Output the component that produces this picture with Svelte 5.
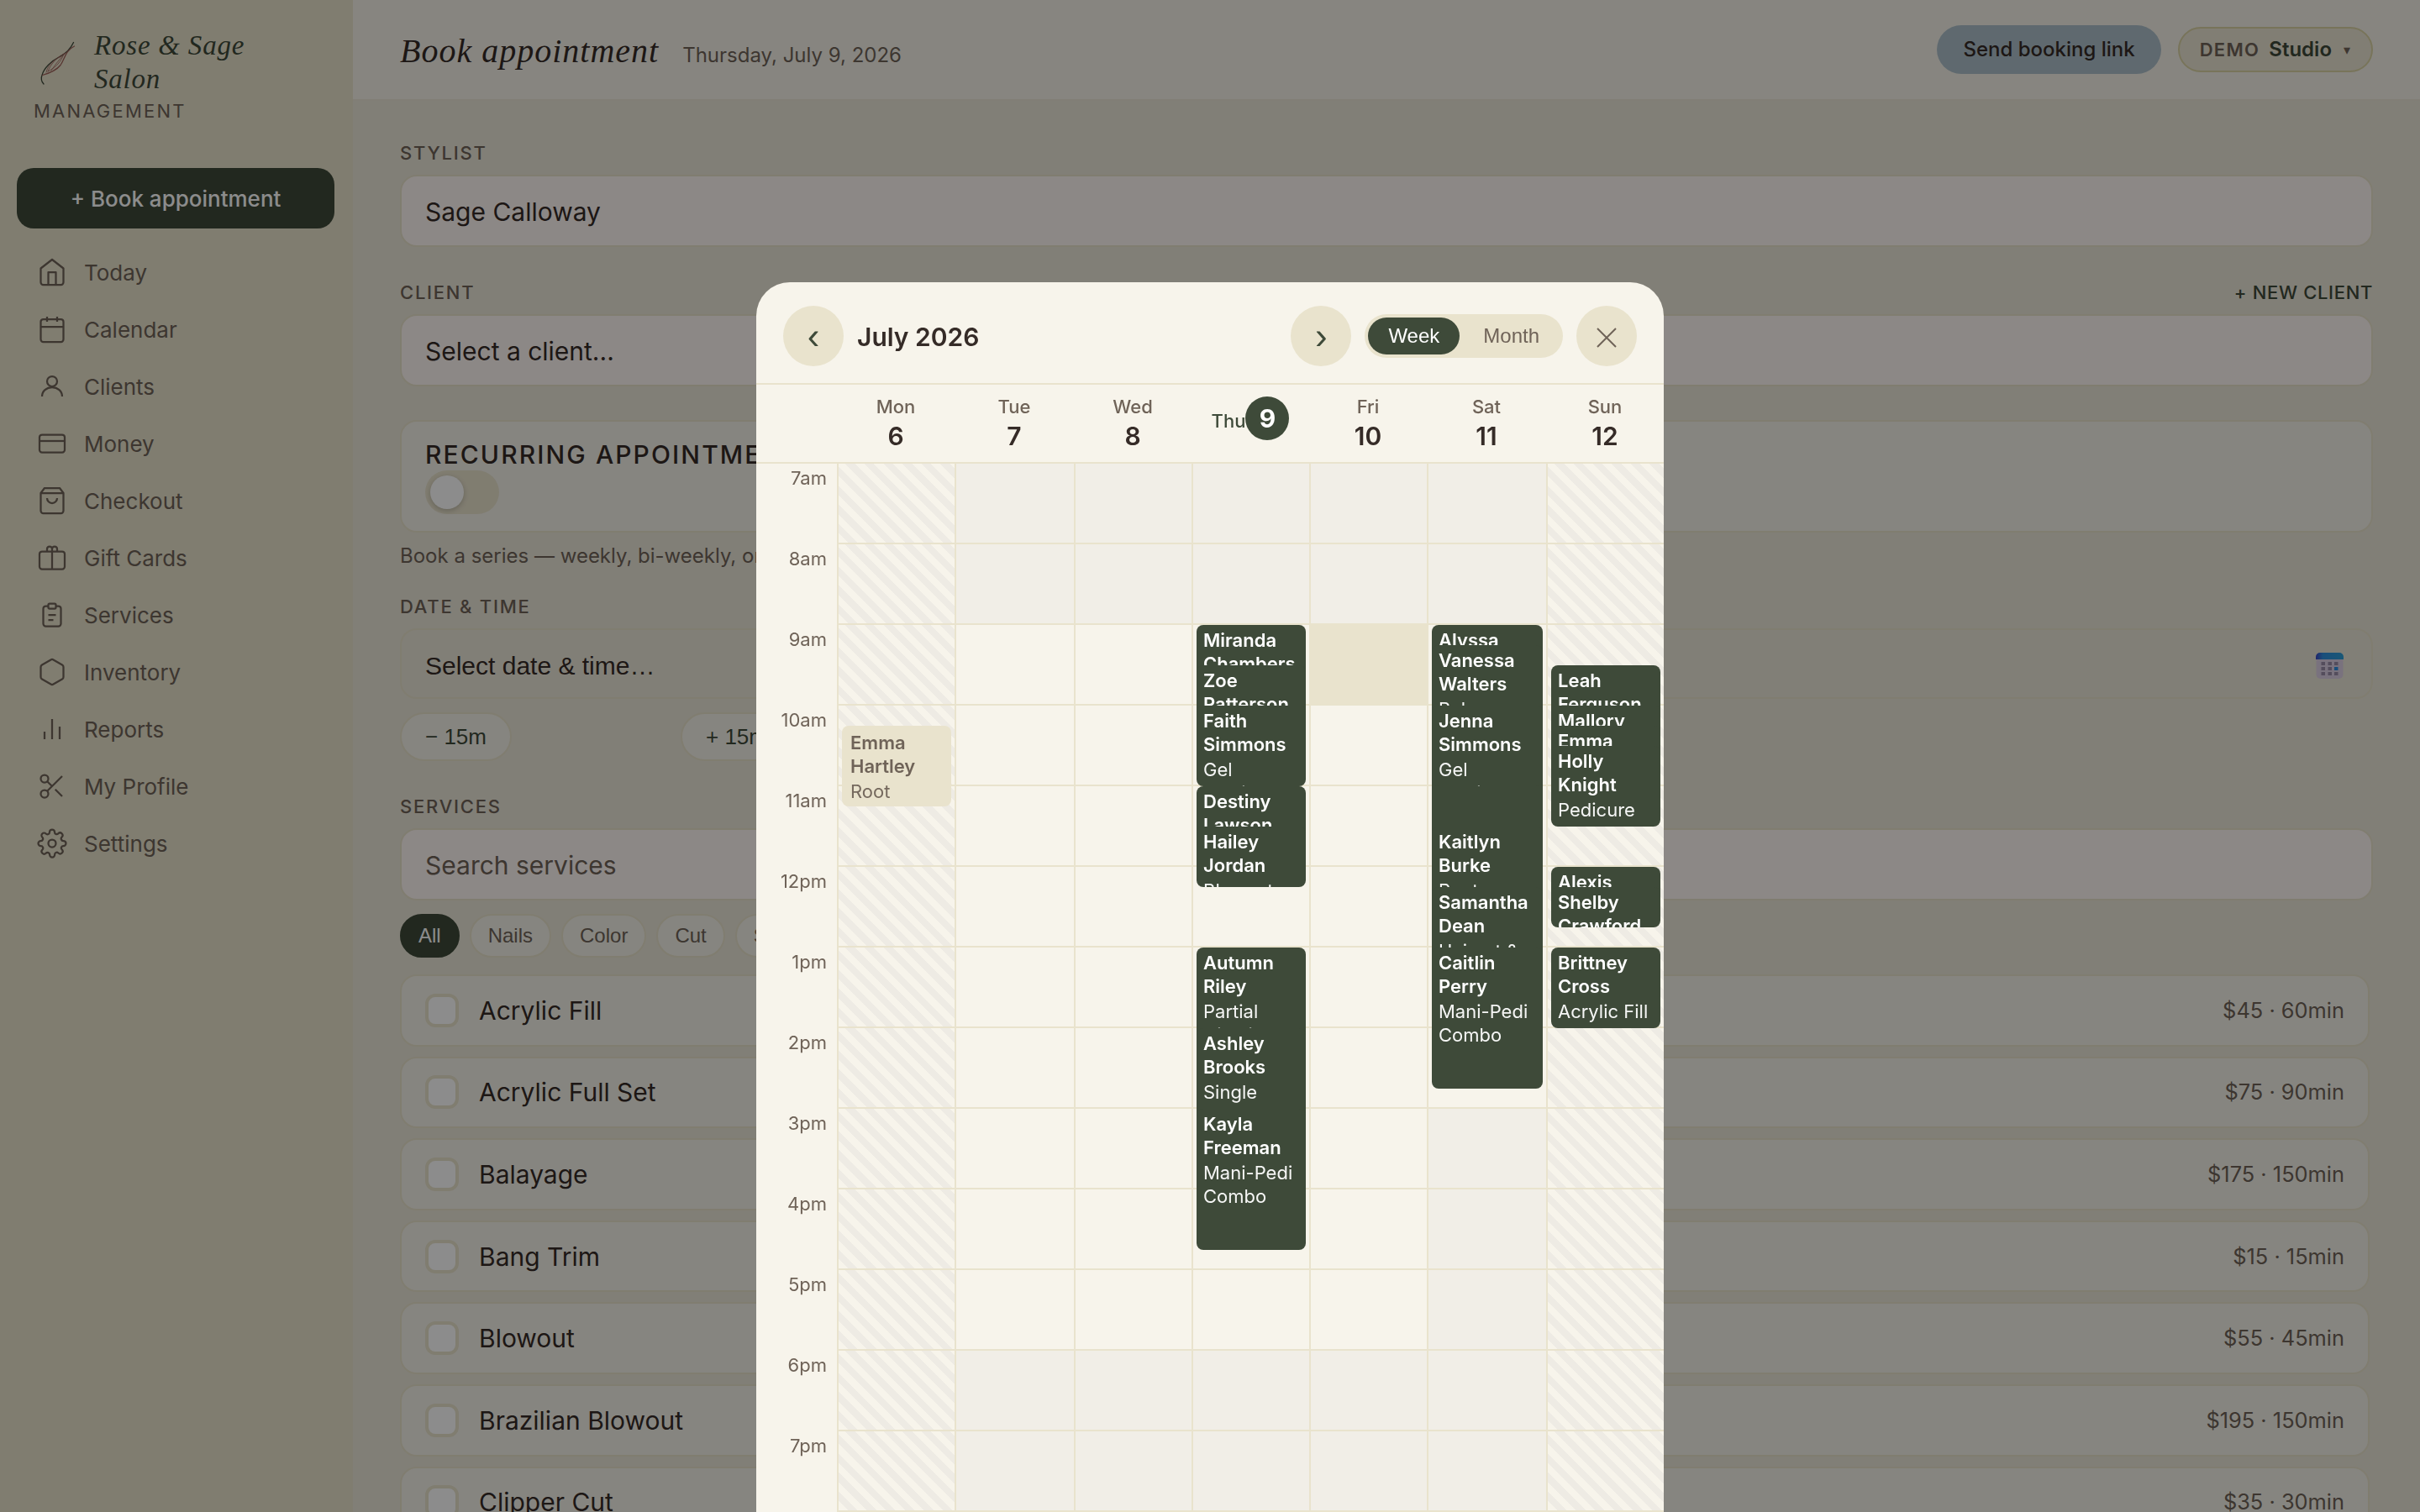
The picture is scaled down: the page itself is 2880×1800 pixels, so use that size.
<script>
  const HOUR = 96;
  const FIRST_HOUR = 7;

  const nav = [
    { label: "Today", icon: "home" },
    { label: "Calendar", icon: "calendar" },
    { label: "Clients", icon: "user" },
    { label: "Money", icon: "card" },
    { label: "Checkout", icon: "bag" },
    { label: "Gift Cards", icon: "gift" },
    { label: "Services", icon: "clipboard" },
    { label: "Inventory", icon: "box" },
    { label: "Reports", icon: "chart" },
    { label: "My Profile", icon: "scissors" },
    { label: "Settings", icon: "gear" },
  ];

  const categories = ["All", "Nails", "Color", "Cut", "Styling"];

  const services = [
    { name: "Acrylic Fill", price: 45, mins: 60 },
    { name: "Acrylic Full Set", price: 75, mins: 90 },
    { name: "Balayage", price: 175, mins: 150 },
    { name: "Bang Trim", price: 15, mins: 15 },
    { name: "Blowout", price: 55, mins: 45 },
    { name: "Brazilian Blowout", price: 195, mins: 150 },
    { name: "Clipper Cut", price: 35, mins: 30 },
  ];

  const hours = Array.from({ length: 13 }, (_, i) => FIRST_HOUR + i);

  // open / close are in hours; start is in decimal hours, mins is the length
  const days = [
    {
      name: "Mon", date: 6, off: true,
      events: [{ client: "Emma Hartley", service: "Root Touch-Up", start: 10.25, mins: 60, muted: true }],
    },
    { name: "Tue", date: 7, open: 9, close: 18, events: [] },
    { name: "Wed", date: 8, open: 9, close: 18, events: [] },
    {
      name: "Thu", date: 9, open: 9, close: 18, today: true,
      events: [
        { client: "Miranda Chambers", service: "Haircut", start: 9, mins: 60 },
        { client: "Zoe Patterson", service: "Haircut", start: 9.5, mins: 60 },
        { client: "Faith Simmons", service: "Gel Manicure", start: 10, mins: 60 },
        { client: "Destiny Lawson", service: "Haircut", start: 11, mins: 60 },
        { client: "Hailey Jordan", service: "Blowout", start: 11.5, mins: 45 },
        { client: "Autumn Riley", service: "Partial Highlights", start: 13, mins: 120 },
        { client: "Ashley Brooks", service: "Single Process", start: 14, mins: 90 },
        { client: "Kayla Freeman", service: "Mani-Pedi Combo", start: 15, mins: 105 },
      ],
    },
    { name: "Fri", date: 10, open: 9, close: 18, picked: 9, events: [] },
    {
      name: "Sat", date: 11, open: 9, close: 15,
      events: [
        { client: "Alyssa Grant", service: "Bang Trim", start: 9, mins: 30 },
        { client: "Vanessa Walters", service: "Balayage", start: 9.25, mins: 150 },
        { client: "Jenna Simmons", service: "Gel Manicure", start: 10, mins: 60 },
        { client: "Kaitlyn Burke", service: "Root Touch-Up", start: 11.5, mins: 90 },
        { client: "Samantha Dean", service: "Haircut & Style", start: 12.25, mins: 60 },
        { client: "Caitlin Perry", service: "Mani-Pedi Combo", start: 13, mins: 105 },
      ],
    },
    {
      name: "Sun", date: 12, off: true,
      events: [
        { client: "Leah Ferguson", service: "Haircut", start: 9.5, mins: 60 },
        { client: "Mallory Quinn", service: "Bang Trim", start: 10, mins: 30 },
        { client: "Emma Hartley", service: "Blowout", start: 10.25, mins: 45 },
        { client: "Holly Knight", service: "Pedicure", start: 10.5, mins: 60 },
        { client: "Alexis Stone", service: "Bang Trim", start: 12, mins: 30 },
        { client: "Shelby Crawford", service: "Clipper Cut", start: 12.25, mins: 30 },
        { client: "Brittney Cross", service: "Acrylic Fill", start: 13, mins: 60 },
      ],
    },
  ];

  let category = $state("All");
  let view = $state("Week");
  let recurring = $state(false);
  let open = $state(true);

  function hourLabel(h) {
    return h < 12 ? `${h}am` : `${h === 12 ? 12 : h - 12}pm`;
  }

  function isClosed(day, h) {
    return !day.off && (h < day.open || h >= day.close);
  }

  function offset(start) {
    return (start - FIRST_HOUR) * HOUR;
  }
</script>

{#snippet icon(name)}
  <svg class="icon" viewBox="0 0 24 24">
    {#if name === "home"}
      <path d="M3 9l9-7 9 7v11a2 2 0 0 1-2 2H5a2 2 0 0 1-2-2z" />
      <path d="M9 22V12h6v10" />
    {:else if name === "calendar"}
      <rect x="3" y="4" width="18" height="18" rx="2" />
      <path d="M16 2v4M8 2v4M3 10h18" />
    {:else if name === "user"}
      <circle cx="12" cy="8" r="4" />
      <path d="M4 20c0-4.2 3.6-7.3 8-7.3s8 3.1 8 7.3" />
    {:else if name === "card"}
      <rect x="2" y="5" width="20" height="14" rx="2" />
      <path d="M2 10h20" />
    {:else if name === "bag"}
      <path d="M6 2L3 6v14a2 2 0 0 0 2 2h14a2 2 0 0 0 2-2V6l-3-4z" />
      <path d="M3 6h18M16 10a4 4 0 0 1-8 0" />
    {:else if name === "gift"}
      <rect x="2" y="7" width="20" height="14" rx="2" />
      <path d="M12 21V5a2 2 0 0 0-4 0v2M12 7V5a2 2 0 0 1 4 0v2" />
    {:else if name === "clipboard"}
      <path d="M9 5H7a2 2 0 0 0-2 2v12a2 2 0 0 0 2 2h10a2 2 0 0 0 2-2V7a2 2 0 0 0-2-2h-2" />
      <rect x="9" y="3" width="6" height="4" rx="1" />
      <path d="M9 12h6M9 16h4" />
    {:else if name === "box"}
      <path d="M21 16V8a2 2 0 0 0-1-1.73l-7-4a2 2 0 0 0-2 0l-7 4A2 2 0 0 0 3 8v8a2 2 0 0 0 1 1.73l7 4a2 2 0 0 0 2 0l7-4A2 2 0 0 0 21 16z" />
    {:else if name === "chart"}
      <path d="M18 20V10M12 20V4M6 20v-6" />
    {:else if name === "scissors"}
      <circle cx="6" cy="6" r="3" />
      <circle cx="6" cy="18" r="3" />
      <path d="M20 4L8.12 15.88M14.47 14.48L20 20M8.12 8.12L12 12" />
    {:else if name === "gear"}
      <circle cx="12" cy="12" r="3" />
      <path d="M19.4 15a1.65 1.65 0 0 0 .33 1.82l.06.06a2 2 0 0 1-2.83 2.83l-.06-.06a1.65 1.65 0 0 0-1.82-.33 1.65 1.65 0 0 0-1 1.51V21a2 2 0 0 1-4 0v-.09A1.65 1.65 0 0 0 9 19.4a1.65 1.65 0 0 0-1.82.33l-.06.06a2 2 0 0 1-2.83-2.83l.06-.06a1.65 1.65 0 0 0 .33-1.82 1.65 1.65 0 0 0-1.51-1H3a2 2 0 0 1 0-4h.09A1.65 1.65 0 0 0 4.6 9a1.65 1.65 0 0 0-.33-1.82l-.06-.06a2 2 0 0 1 2.83-2.83l.06.06a1.65 1.65 0 0 0 1.82.33H9a1.65 1.65 0 0 0 1-1.51V3a2 2 0 0 1 4 0v.09a1.65 1.65 0 0 0 1 1.51 1.65 1.65 0 0 0 1.82-.33l.06-.06a2 2 0 0 1 2.83 2.83l-.06.06a1.65 1.65 0 0 0-.33 1.82V9a1.65 1.65 0 0 0 1.51 1H21a2 2 0 0 1 0 4h-.09a1.65 1.65 0 0 0-1.51 1z" />
    {/if}
  </svg>
{/snippet}

<div class="app">
  <aside class="sidebar">
    <div class="brand">
      <svg class="leaf" viewBox="0 0 56 56">
        <path class="sage" d="M47.5 4.5C44 12 38 18 31 21.5C20 27 12.5 36 10.5 42C8.5 47 9 51 12 54" />
        <path class="rose" d="M48.5 9C38 14 37 24 32 31.5C27 38 19 41 10.5 43.5" />
        <path class="vein" d="M38 17C27 22 20 31 17 39M36 18C33 27 27 34 17 39M38 17C31 24 25 32 21 38M33 21C24 25 17 31 15 40" />
      </svg>
      <span class="brand-name">Rose &amp; Sage Salon</span>
    </div>
    <div class="brand-sub">MANAGEMENT</div>

    <button class="book">+ Book appointment</button>

    <nav>
      {#each nav as item}
        <a class="nav-item" href="#{item.icon}">
          {@render icon(item.icon)}
          <span>{item.label}</span>
        </a>
      {/each}
    </nav>
  </aside>

  <div class="main">
    <header class="topbar">
      <h1>Book appointment</h1>
      <span class="today">Thursday, July 9, 2026</span>
      <button class="link-btn">Send booking link</button>
      <button class="plan">
        <span class="plan-tag">DEMO</span>
        <span class="plan-name">Studio</span>
        <span class="plan-caret">▾</span>
      </button>
    </header>

    <div class="form">
      <section class="field">
        <div class="label">STYLIST</div>
        <div class="input">Sage Calloway</div>
      </section>

      <section class="field">
        <div class="label">
          <span>CLIENT</span>
          <span class="new-client">+ NEW CLIENT</span>
        </div>
        <div class="input">Select a client...</div>
      </section>

      <div class="recurring">
        <div class="recurring-title">RECURRING APPOINTMENT</div>
        <button
          class="switch"
          class:on={recurring}
          aria-label="Recurring appointment"
          onclick={() => (recurring = !recurring)}
        >
          <span class="knob"></span>
        </button>
      </div>
      <p class="hint">Book a series — weekly, bi-weekly, or monthly.</p>

      <section class="field">
        <div class="label">DATE &amp; TIME</div>
        <div class="input picker">
          <span>Select date &amp; time…</span>
          <svg class="cal-emoji" viewBox="0 0 33 31">
            <defs>
              <linearGradient id="cal-top">
                <stop offset="0" stop-color="#3c46c4" />
                <stop offset="0.25" stop-color="#2f8fe0" />
                <stop offset="1" stop-color="#2ea0d8" />
              </linearGradient>
            </defs>
            <rect x="0.5" y="0" width="32" height="31" rx="5" fill="#dccfe6" />
            <path d="M0 8V5a5 5 0 0 1 5-5h23a5 5 0 0 1 5 5v3z" fill="url(#cal-top)" />
            {#each [11, 17, 23] as y}
              {#each [6.5, 14.5, 22] as x}
                <rect {x} {y} width="4.5" height="4" fill={y === 17 && x === 22 ? "#2f8fe0" : "#9a8ca8"} />
              {/each}
            {/each}
          </svg>
        </div>
        <div class="nudges">
          <button class="nudge">− 15m</button>
          <button class="nudge">+ 15m</button>
        </div>
      </section>

      <section class="field">
        <div class="label">SERVICES</div>
        <div class="input placeholder">Search services</div>
        <div class="chips">
          {#each categories as c}
            <button class="chip" class:active={c === category} onclick={() => (category = c)}>{c}</button>
          {/each}
        </div>
        <div class="services">
          {#each services as s}
            <div class="service">
              <span class="check"></span>
              <span class="service-name">{s.name}</span>
              <span class="service-meta">${s.price} · {s.mins}min</span>
            </div>
          {/each}
        </div>
      </section>
    </div>
  </div>

  {#if open}
    <div class="backdrop">
      <div class="sheet" role="dialog" aria-modal="true">
        <div class="sheet-head">
          <button class="round">‹</button>
          <div class="month">July 2026</div>
          <button class="round">›</button>
          <div class="toggle">
            {#each ["Week", "Month"] as v}
              <button class:active={v === view} onclick={() => (view = v)}>{v}</button>
            {/each}
          </div>
          <button class="round" aria-label="Close" onclick={() => (open = false)}>
            <svg class="cross" viewBox="0 0 24 24"><path d="M1 1l22 22M23 1L1 23" /></svg>
          </button>
        </div>

        <div class="days">
          <div></div>
          {#each days as day}
            <div class="day" class:now={day.today}>
              <span class="day-name">{day.name}</span><span class="day-num">{day.date}</span>
            </div>
          {/each}
        </div>

        <div class="grid">
          <div class="times">
            {#each hours as h}
              <div class="time">{hourLabel(h)}</div>
            {/each}
          </div>
          {#each days as day}
            <div class="column">
              {#each hours as h}
                <div
                  class="cell"
                  class:off={day.off}
                  class:closed={isClosed(day, h)}
                  class:picked={day.picked === h}
                ></div>
              {/each}
              {#each day.events as e}
                <div
                  class="event"
                  class:muted={e.muted}
                  style="top: {offset(e.start)}px; height: {(e.mins / 60) * HOUR}px"
                >
                  <div class="event-client">{e.client}</div>
                  <div class="event-service">{e.service}</div>
                </div>
              {/each}
            </div>
          {/each}
        </div>
      </div>
    </div>
  {/if}
</div>

<style>
  :global(body) {
    overflow: hidden;
  }

  .app {
    --cream: #f7f4eb;
    --sand: #e9e3cd;
    --forest: #3e4a39;
    --ink: #352b27;
    --taupe: #6f6358;
    --system: "Liberation Sans", sans-serif;
    display: flex;
    height: 1800px;
    overflow: hidden;
    font-family: Inter, sans-serif;
    font-size: 30px;
    line-height: 1.5;
    color: var(--ink);
    background: #ece7d9;
  }

  .app *,
  .app *::before {
    box-sizing: border-box;
  }

  button {
    font: inherit;
    border: none;
    padding: 0;
    color: inherit;
    cursor: pointer;
  }

  /* sidebar */
  .sidebar {
    width: 420px;
    flex: none;
    padding: 32px 22px 0 20px;
    background: var(--sand);
  }

  .brand {
    display: flex;
    align-items: center;
    gap: 16px;
    padding-left: 20px;
    height: 80px;
  }

  .leaf {
    width: 56px;
    height: 56px;
    flex: none;
    margin-top: 4px;
    fill: none;
    stroke-linecap: round;
  }

  .sage {
    stroke: var(--forest);
    stroke-width: 1.3;
  }

  .rose {
    stroke: #a0625a;
    stroke-width: 1.3;
  }

  .vein {
    stroke: #a0625a;
    stroke-width: 0.8;
  }

  .brand-name {
    width: 220px;
    padding-top: 4px;
    font-family: "Liberation Serif", serif;
    font-style: italic;
    font-size: 33px;
    line-height: 40px;
    letter-spacing: 0.024em;
    color: var(--forest);
  }

  .brand-sub {
    padding-left: 20px;
    margin-top: 6px;
    font-size: 22px;
    line-height: 28px;
    letter-spacing: 0.1em;
    color: var(--taupe);
  }

  .book {
    display: block;
    width: 100%;
    height: 72px;
    margin-top: 54px;
    border-radius: 20px;
    background: var(--forest);
    color: #fff;
    font-size: 26px;
    font-weight: 500;
  }

  nav {
    display: flex;
    flex-direction: column;
    gap: 4px;
    margin-top: 20px;
  }

  .nav-item {
    display: flex;
    align-items: center;
    gap: 20px;
    height: 64px;
    padding-left: 24px;
    font-size: 26px;
    color: var(--taupe);
    text-decoration: none;
  }

  .icon {
    width: 36px;
    height: 36px;
    fill: none;
    stroke: currentColor;
    stroke-width: 1.5;
    stroke-linejoin: round;
  }

  /* top bar */
  .main {
    flex: 1;
    min-width: 0;
  }

  .topbar {
    display: flex;
    align-items: center;
    height: 120px;
    padding: 0 56px;
    background: #f6f3ea;
    border-bottom: 2px solid #ebe5d8;
  }

  h1 {
    margin: 4px 0 0;
    font-family: "Liberation Serif", serif;
    font-style: italic;
    font-weight: 400;
    font-size: 40px;
    line-height: 48px;
    letter-spacing: 1px;
  }

  .today {
    margin: 13px auto 0 28px;
    font-size: 24px;
    color: var(--taupe);
  }

  .link-btn {
    height: 58px;
    padding: 0 31px;
    border-radius: 29px;
    background: #adc0ca;
    font-size: 24px;
    font-weight: 500;
  }

  .plan {
    display: flex;
    align-items: center;
    height: 54px;
    margin-left: 20px;
    padding: 0 25px 0 24px;
    border: 2px solid #dad3a4;
    border-radius: 27px;
    background: #ece6d3;
  }

  .plan-tag {
    font-size: 22px;
    font-weight: 600;
    letter-spacing: 0.06em;
    color: var(--taupe);
  }

  .plan-name {
    margin-left: 11px;
    font-size: 24px;
    font-weight: 600;
    color: var(--forest);
  }

  .plan-caret {
    margin-left: 14px;
    font-size: 16px;
    color: var(--taupe);
  }

  /* form */
  .form {
    padding: 48px 56px 0;
  }

  .field {
    margin-bottom: 40px;
  }

  .label {
    display: flex;
    justify-content: space-between;
    margin-bottom: 12px;
    font-size: 22px;
    line-height: 28px;
    font-weight: 500;
    letter-spacing: 0.08em;
    color: var(--taupe);
  }

  .new-client {
    letter-spacing: 0.03em;
    color: var(--forest);
  }

  .input {
    display: flex;
    align-items: center;
    height: 86px;
    padding: 2px 28px 0;
    border: 2px solid var(--sand);
    border-radius: 20px;
    background: #fff7f4;
  }

  .input.placeholder {
    color: var(--taupe);
  }

  .picker {
    justify-content: space-between;
    height: 84px;
    padding-top: 4px;
    background: none;
    font-family: var(--system);
  }

  .cal-emoji {
    width: 33px;
    height: 31px;
    margin-right: 5px;
  }

  .recurring {
    height: 134px;
    padding: 20px 28px;
    border: 2px solid var(--sand);
    border-radius: 20px;
    background: #f5f3ea;
  }

  .recurring-title {
    line-height: 38px;
    font-weight: 500;
    letter-spacing: 0.07em;
  }

  .switch {
    display: flex;
    align-items: center;
    width: 88px;
    height: 52px;
    padding: 0 6px;
    border-radius: 26px;
    background: var(--sand);
  }

  .switch.on {
    justify-content: flex-end;
    background: var(--forest);
  }

  .knob {
    width: 40px;
    height: 40px;
    border-radius: 50%;
    background: #fff;
    box-shadow: 0 2px 6px rgba(0, 0, 0, 0.2);
  }

  .hint {
    margin: 12px 0 30px;
    font-size: 24px;
    line-height: 32px;
    color: var(--taupe);
  }

  .nudges {
    display: flex;
    gap: 201px;
    margin-top: 16px;
  }

  .nudge {
    height: 58px;
    padding: 0 28px;
    border: 2px solid var(--sand);
    border-radius: 29px;
    background: #f5f3ea;
    font-family: var(--system);
    font-size: 26px;
    color: var(--forest);
  }

  .chips {
    display: flex;
    gap: 12px;
    margin: 16px 0 20px;
  }

  .chip {
    height: 52px;
    padding: 0 20px;
    border: 2px solid var(--sand);
    border-radius: 26px;
    background: #f5f3ea;
    font-family: var(--system);
    font-size: 24px;
    color: var(--taupe);
  }

  .chip.active {
    border-color: var(--forest);
    background: var(--forest);
    color: #fff;
  }

  .services {
    display: flex;
    flex-direction: column;
    gap: 12px;
    padding-right: 4px;
  }

  .service {
    display: flex;
    align-items: center;
    height: 85.6px;
    padding: 0 28px;
    border: 2px solid var(--sand);
    border-radius: 20px;
    background: #f5f3ea;
  }

  .service-name {
    padding-top: 1px;
  }

  .check {
    width: 40px;
    height: 40px;
    margin-right: 24px;
    border: 4px solid var(--sand);
    border-radius: 12px;
    background: #fff;
  }

  .service-meta {
    margin-left: auto;
    font-size: 25.4px;
    line-height: 36px;
    color: var(--taupe);
  }

  /* week picker */
  .backdrop {
    position: fixed;
    inset: 0;
    display: flex;
    align-items: flex-end;
    justify-content: center;
    background: rgba(0, 0, 0, 0.45);
  }

  .sheet {
    width: 1080px;
    height: 1464px;
    overflow: hidden;
    border-radius: 40px 40px 0 0;
    background: var(--cream);
  }

  .sheet-head {
    display: flex;
    align-items: center;
    gap: 16px;
    height: 122px;
    padding: 28px 32px 20px;
    border-bottom: 2px solid var(--sand);
  }

  .round {
    display: flex;
    align-items: center;
    justify-content: center;
    width: 72px;
    height: 72px;
    border-radius: 50%;
    background: var(--sand);
    font-family: var(--system);
    font-size: 44px;
    line-height: 50px;
    color: var(--forest);
  }

  .month {
    flex: 1;
    padding-top: 2px;
    font-weight: 600;
  }

  .toggle {
    display: flex;
    gap: 4px;
    padding: 4px;
    border-radius: 26px;
    background: var(--sand);
  }

  .toggle button {
    height: 44px;
    padding: 0 24px;
    border-radius: 22px;
    background: none;
    font-family: var(--system);
    font-size: 24px;
    color: var(--taupe);
  }

  .toggle button.active {
    background: var(--forest);
    color: #fff;
  }

  .cross {
    width: 24px;
    height: 24px;
    margin-top: 4px;
    fill: none;
    stroke: var(--taupe);
    stroke-width: 2;
  }

  .days,
  .grid {
    display: grid;
    grid-template-columns: 96px 140px 142px 140px 140px 140px 142px 140px;
  }

  .days {
    height: 94px;
    border-bottom: 2px solid var(--sand);
  }

  .day {
    padding-top: 11px;
    text-align: center;
  }

  .day-name {
    display: block;
    font-size: 22px;
    line-height: 30px;
    font-weight: 500;
    color: var(--taupe);
  }

  .day-num {
    display: block;
    line-height: 41px;
    font-weight: 600;
  }

  .day.now {
    display: flex;
    justify-content: center;
    padding-top: 14px;
  }

  .now .day-name {
    line-height: 58px;
    color: var(--forest);
  }

  .now .day-num {
    width: 52px;
    height: 52px;
    border-radius: 50%;
    background: var(--forest);
    color: #fff;
    line-height: 53px;
    font-weight: 700;
  }

  .time {
    height: 96px;
    padding: 1px 12px 0 0;
    text-align: right;
    font-size: 22px;
    line-height: 33px;
    color: var(--taupe);
  }

  .column {
    position: relative;
    border-left: 2px solid var(--sand);
  }

  .cell {
    height: 96px;
    border-bottom: 2px solid var(--sand);
  }

  .cell.closed {
    background: #f1eee7;
  }

  .cell.off {
    background: repeating-linear-gradient(45deg, transparent 0 8px, #eeebe4 8px 16px);
  }

  .cell.picked {
    background: var(--sand);
  }

  .event {
    position: absolute;
    left: 4px;
    right: 4px;
    padding: 4px 8px;
    overflow: hidden;
    border-radius: 8px;
    background: var(--forest);
    color: #fff;
    font-size: 22px;
    line-height: 28px;
  }

  .event-client {
    font-weight: 600;
  }

  .event-service {
    margin-top: 2px;
    opacity: 0.95;
  }

  .event.muted {
    padding: 6px 10px;
    background: var(--sand);
    color: var(--taupe);
  }
</style>
